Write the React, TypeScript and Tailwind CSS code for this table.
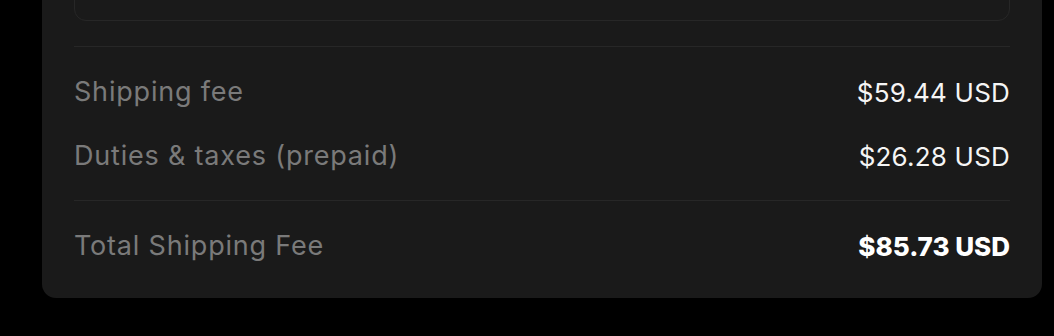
export default function App() {
  return (
    <div className="min-h-screen w-full bg-black overflow-hidden" style={{ fontFamily: "Inter, 'Open Sans', sans-serif" }}>
      <div className="-mt-[104px] ml-[42px] w-[1000px] rounded-[14px] bg-[#1a1a1a] px-8 pt-6 pb-[36px]">
        {/* address / summary box above, mostly scrolled out */}
        <div className="h-[101px] rounded-[12px] border border-[#272727]" />

        <div className="mt-[25px] border-t border-[#272727] pt-[29px] pb-[28px] flex flex-col gap-8">
          <div className="flex items-center justify-between h-8">
            <span className="text-[27px] tracking-[0.8px] text-[#7a7a7a]">Shipping fee</span>
            <span className="text-[26px] tracking-[0.2px] text-[#f5f5f5]">$59.44 USD</span>
          </div>
          <div className="flex items-center justify-between h-8">
            <span className="text-[27px] tracking-[0.8px] text-[#7a7a7a]">Duties &amp; taxes (prepaid)</span>
            <span className="text-[26px] tracking-[0.2px] text-[#f5f5f5]">$26.28 USD</span>
          </div>
        </div>

        <div className="border-t border-[#272727] pt-[29px]">
          <div className="flex items-center justify-between h-8">
            <span className="text-[27px] tracking-[0.8px] text-[#7a7a7a]">Total Shipping Fee</span>
            <span className="text-[26px] font-extrabold text-white">$85.73 USD</span>
          </div>
        </div>
      </div>
    </div>
  )
}
